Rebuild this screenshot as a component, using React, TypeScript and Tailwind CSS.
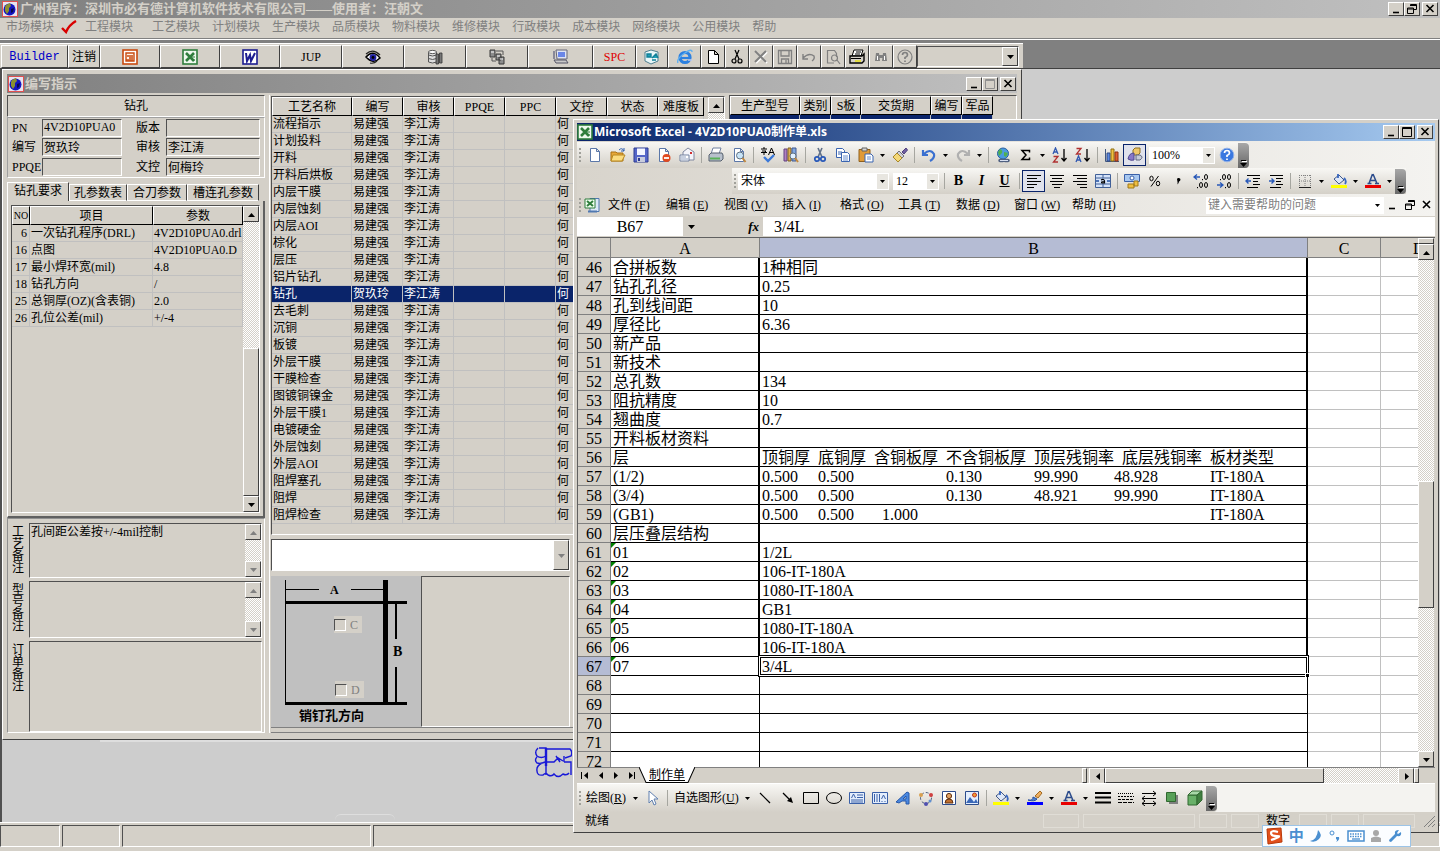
import React from "react";

const RAISED = "border border-t-white border-l-white border-r-[#404040] border-b-[#404040] bg-[#d4d0c8]";
const SUNKEN = "border border-t-[#505050] border-l-[#505050] border-r-white border-b-white";
const DITHER = "bg-[repeating-conic-gradient(#fff_0_25%,#d4d0c8_0_50%)] bg-[length:2px_2px]";

const W = ({ children }: { children: React.ReactNode }) => (
  <g fill="none" stroke="#000" strokeWidth="1.2">{children}</g>
);

const sheetPage = <path d="M3.5 1.5h6l3 3v10h-9z M9.5 1.5v3h3" fill="#fff" stroke="#5b77a8" />;

const ICONS: Record<string, React.ReactNode> = {
  globe: (
    <>
      <rect x="0.5" y="0.5" width="15" height="15" fill="#e8e4f0" stroke="#e05050" />
      <circle cx="7.500" cy="8.500" r="6" fill="#1515c0" />
      <path d="M4 4l4-2 1 3-2 2v3l-2 3-2-3V6z" fill="#8a9030" />
      <path d="M9 8l3-1-1 4-2 1z" fill="#0a0a50" />
    </>
  ),
  ppt: (
    <>
      <rect x="1" y="1" width="14" height="14" fill="#fff" stroke="#c84a10" strokeWidth="1.6" />
      <path d="M4 4h8v8H4z" fill="#fff4e8" stroke="#c84a10" strokeWidth="1.4" />
      <path d="M5 7h6M7 9h4M4 11h7" stroke="#c84a10" strokeWidth="1.4" />
    </>
  ),
  xls: (
    <>
      <rect x="1" y="1" width="14" height="14" fill="#eef8ee" stroke="#2f7d3c" strokeWidth="1.6" />
      <path d="M4 4l8 8M12 4l-8 8" stroke="#2f7d3c" strokeWidth="2.6" />
      <path d="M9 8h4M10 11h3" stroke="#2f7d3c" />
    </>
  ),
  doc: (
    <>
      <rect x="1" y="1" width="14" height="14" fill="#fff" stroke="#1c1c90" strokeWidth="1.6" />
      <path d="M4 4l1 8 3-6 1 6 4-8" fill="none" stroke="#1c1c90" strokeWidth="2" />
    </>
  ),
  eye: (
    <>
      <path d="M1 8q7-8 14 1q-7 7-14-1z" fill="#fff" stroke="#000" strokeWidth="1.5" />
      <path d="M1 5q7-6 14 1M5 14q4 1 7-2" fill="none" stroke="#222" strokeWidth="1.2" />
      <circle cx="8" cy="8.5" r="3.4" fill="#2020a0" />
      <circle cx="8" cy="8.5" r="1.4" fill="#000" />
    </>
  ),
  db: (
    <>
      <path d="M1.5 3v10q4 2 8 0V3z" fill="#ddd" stroke="#555" />
      <ellipse cx="5.5" cy="3" rx="4" ry="1.6" fill="#fff" stroke="#555" />
      <path d="M1.5 6q4 2 8 0M1.5 9.5q4 2 8 0" fill="none" stroke="#555" />
      <path d="M9 5h2.500v10H9zM12.500 4H15v10h-2.500z" fill="#777" stroke="#333" strokeWidth="0.8" />
    </>
  ),
  net: (
    <>
      <path d="M1 1h5v7H1zM7 5h5v6H7zM10 8h5v7h-5z" fill="#8c8c8c" stroke="#3a3a3a" />
      <path d="M2 3h3M8 7h3M11 10h3" stroke="#fff" />
      <path d="M7 2h7v4M3 9v3h4" fill="none" stroke="#555" />
    </>
  ),
  pc: (
    <>
      <path d="M3 1h11v9H4z" fill="#dfe4f4" stroke="#667" />
      <path d="M5 3h7v5H5z" fill="#6a86e8" />
      <path d="M1 11h12l2 3H3z" fill="#c8c8c8" stroke="#556" />
      <path d="M1 2v8" stroke="#889" strokeWidth="2" />
    </>
  ),
  book: (
    <>
      <path d="M1 3l6-2 7 2v9l-7 3-6-3z" fill="#e8f6f8" stroke="#508090" />
      <path d="M3 5h4v3H3zM8 9l4-4 2 4M8 11h4" fill="#20a0b8" stroke="#108098" strokeWidth="1.4" />
    </>
  ),
  ie: (
    <>
      <circle cx="8" cy="8.500" r="5" fill="none" stroke="#2b80e0" strokeWidth="3.200" />
      <path d="M4 9h10" stroke="#2b80e0" strokeWidth="2.200" />
      <path d="M11 11h4" stroke="#b8c8f0" strokeWidth="1.600" />
      <path d="M1 14Q-1 10 8 4q7-5 7-1" fill="none" stroke="#60b0f0" strokeWidth="1.4" />
    </>
  ),
  blank: <path d="M3.500 1.500h6l4 4v9h-10z M9.500 1.500v4h4" fill="#fff" stroke="#000" />,
  cutBlack: (
    <W>
      <path d="M6 1l4 9M10 1L6 10" />
      <circle cx="5" cy="12" r="2" />
      <circle cx="11" cy="12" r="2" />
    </W>
  ),
  del: (
    <>
      <path d="M3 3l11 11M14 3L3 14" stroke="#fff" strokeWidth="2" />
      <path d="M2 2l11 11M13 2L2 13" stroke="#808080" strokeWidth="2" />
    </>
  ),
  saveGray: (
    <g fill="none" stroke="#808080" strokeWidth="1.3">
      <path d="M1.500 1.500h13v13h-13z" />
      <path d="M4 2v5h8V2M4.500 14v-4h7v4M9 11v3" />
    </g>
  ),
  undoGray: <path d="M2 5v5h5M2 9q6-6 11-2q1 3-2 5" fill="none" stroke="#808080" strokeWidth="1.400" />,
  previewGray: (
    <g fill="none" stroke="#808080" strokeWidth="1.2">
      <path d="M9 14H2.500V1.500h7l2 3V8" />
      <circle cx="9.500" cy="9" r="3" />
      <path d="M12 11l3 4" />
    </g>
  ),
  printBlack: (
    <>
      <path d="M5 1h9l-2 6H3z" fill="#fff" stroke="#000" />
      <path d="M1 7h12l2-2v7l-2 2H1z" fill="#d4d0c8" stroke="#000" strokeWidth="1.4" />
      <path d="M6 12h6" stroke="#e8e020" strokeWidth="1.600" />
      <path d="M7 3h5M6 5h5M2 9.500h10" stroke="#000" />
    </>
  ),
  find: (
    <g fill="#808080">
      <path d="M3 4h3l1 8H2zM10 4h3l1 8H9z" />
      <path d="M6 6h4v3H6z" />
      <path d="M4.500 7v4M11.500 7v4" stroke="#fff" />
    </g>
  ),
  helpGray: (
    <g fill="none" stroke="#808080" strokeWidth="1.200">
      <circle cx="8" cy="8" r="7" />
      <path d="M5.500 6q0-2.500 2.500-2.500T10.500 6Q10.500 7.500 8 8.500V10M8 11.500v1.500" strokeWidth="1.700" />
    </g>
  ),
  page: sheetPage,
  open: (
    <>
      <path d="M1 5h5l1 1h6v8H1z" fill="#e8a83a" stroke="#a87010" />
      <path d="M3 8h12l-3 6H1z" fill="#fbdc80" stroke="#b88820" />
      <path d="M9 3q3-3 5 1M14 1v3h-3" fill="none" stroke="#3060b0" />
    </>
  ),
  save: (
    <>
      <path d="M1 1h14v14H1z" fill="#5566c8" stroke="#2c3a90" />
      <path d="M4 1.500h8V8H4z" fill="#f4f6ff" />
      <path d="M4 10h8v5H4z" fill="#c8ccdc" />
      <path d="M5 11h2v3H5z" fill="#2c3a90" />
    </>
  ),
  perm: (
    <>
      {sheetPage}
      <circle cx="10.500" cy="11" r="4" fill="#e04a20" />
      <path d="M8 11h5" stroke="#fff" strokeWidth="1.800" />
    </>
  ),
  mail: (
    <>
      <path d="M4 5l5-4 6 4v8H4z" fill="#f4f4fa" stroke="#8088a0" />
      <path d="M1 8h9v6H1z" fill="#fff" stroke="#7080a0" />
      <path d="M2 10h5M2 12h7" stroke="#90a0c0" />
      <path d="M11 5h2v2h-2z" fill="#d03030" />
    </>
  ),
  print: (
    <>
      <path d="M5 1h8l-2 6H3z" fill="#fff" stroke="#7080a0" />
      <path d="M1 8l2-2h11l1 2v4l-2 2H1z" fill="#b8c0cc" stroke="#56606e" />
      <path d="M2 11.500h10" stroke="#58b058" strokeWidth="2" />
    </>
  ),
  preview: (
    <>
      {sheetPage}
      <circle cx="9" cy="8.500" r="3.500" fill="#c8e4f8" stroke="#607080" />
      <path d="M11.500 11l3 4" stroke="#c08840" strokeWidth="2" />
    </>
  ),
  spell: (
    <>
      <path d="M1 2h6M4 0v2M2 4h4l-2 2v2M1 5.500h6M8.500 8l3-7 3 7M9.500 5.500h4" fill="none" stroke="#000" />
      <path d="M4 10l4 4 6-6" fill="none" stroke="#3a78d8" strokeWidth="2.400" />
    </>
  ),
  research: (
    <>
      <path d="M1 2h3v12H1z" fill="#b080c0" stroke="#604080" />
      <path d="M5 1h3v13H5z" fill="#e0b050" stroke="#806020" />
      <path d="M9 1h4v13H9z" fill="#80a8e0" stroke="#405890" />
      <circle cx="10" cy="9" r="3" fill="#e0f0ff" stroke="#607080" />
      <path d="M12 11l3 4" stroke="#c08840" strokeWidth="2" />
    </>
  ),
  cut: (
    <g fill="none">
      <path d="M6 1l4 9M10 1L6 10" stroke="#607088" strokeWidth="1.600" />
      <circle cx="5" cy="12" r="2.200" stroke="#2858b8" strokeWidth="1.700" />
      <circle cx="11" cy="12" r="2.200" stroke="#2858b8" strokeWidth="1.700" />
    </g>
  ),
  copy: (
    <g fill="#fff" stroke="#3a64b0">
      <path d="M1.500 1.500h6l2 2v7h-8z" />
      <path d="M3 5h4M3 7h4" />
      <path d="M6.500 5.500h6l2 2v7h-8z" />
      <path d="M8 9h5M8 11h5M8 13h5" stroke="#6a90d0" />
    </g>
  ),
  paste: (
    <>
      <path d="M1 2.500h11v12H1z" fill="#e09a38" stroke="#90601c" />
      <path d="M4 1h5v3H4z" fill="#d8d8d8" stroke="#606060" />
      <path d="M7 7h6l2 2v6H7z" fill="#fff" stroke="#3a64b0" />
      <path d="M9 10h4M9 12h4" stroke="#6a90d0" />
    </>
  ),
  brush: (
    <>
      <path d="M10 5l4-4 1.500 2-3.500 4z" fill="#7060a0" stroke="#504080" />
      <path d="M7 4l5 5-2 2-5-5z" fill="#d0d0d8" stroke="#707080" />
      <path d="M5 6l5 5-4 4-5-5z" fill="#f4d878" stroke="#a88828" />
    </>
  ),
  undo: <path d="M2 3v5h5M3 7q6-6 10 0q1 4-4 7" fill="none" stroke="#3a70d0" strokeWidth="2.200" />,
  redo: <path d="M14 3v5H9M13 7Q7 1 3 7q-1 4 4 7" fill="none" stroke="#b0b0b0" strokeWidth="2.200" />,
  link: (
    <>
      <circle cx="8" cy="6.500" r="5.500" fill="#4a9ae0" stroke="#2860a0" />
      <path d="M5 2q3 1 2 4L4 9 3 5zM9 5l4 1-2 4-2-1z" fill="#50b050" />
      <path d="M5 13.500h3M10 13.500h3" stroke="#506080" strokeWidth="3.500" strokeLinecap="round" />
      <path d="M5 13.500h8" stroke="#d8e0f0" />
    </>
  ),
  sigma: <path d="M11.500 5.500V3.500H4l4 4.500-4 4.500h7.500v-2" fill="none" stroke="#000" strokeWidth="1.500" />,
  az: (
    <g fill="none" strokeWidth="1.300">
      <path d="M1 7l2.500-6L6 7M2 5h3" stroke="#3058b0" />
      <path d="M1.500 9.500H6L1.500 15H6" stroke="#b03030" />
      <path d="M12 2v12M9.500 11l2.500 3 2.500-3" stroke="#000" />
    </g>
  ),
  za: (
    <g fill="none" strokeWidth="1.300">
      <path d="M1.500 1.500H6L1.500 7H6" stroke="#b03030" />
      <path d="M1 15l2.500-6L6 15M2 13h3" stroke="#3058b0" />
      <path d="M12 2v12M9.500 11l2.500 3 2.500-3" stroke="#000" />
    </g>
  ),
  chart: (
    <>
      <path d="M1.500 2v12.500H15" fill="none" stroke="#405880" />
      <path d="M3 6h3v8H3z" fill="#5a88e0" stroke="#304880" />
      <path d="M7 2h3v12H7z" fill="#f0c040" stroke="#907010" />
      <path d="M11 5h3v9h-3z" fill="#e06030" stroke="#903010" />
    </>
  ),
  draw: (
    <>
      <path d="M6 3l2-2h5v5l-2 2H6z" fill="#f0c868" stroke="#907020" />
      <path d="M1 12q1-6 6-6v7q-3 1-6-1z" fill="#8878c8" stroke="#504890" />
      <path d="M9 8h4q4 2 0 5H9z" fill="#c8ccd8" stroke="#606880" />
    </>
  ),
  help: (
    <>
      <circle cx="8" cy="8" r="6.800" fill="#3a78e0" stroke="#90b0e8" />
      <path d="M5.500 6q0-2.500 2.500-2.500T10.500 6Q10.500 7.500 8 8.500V10M8 11.500v1.500" fill="none" stroke="#fff" strokeWidth="1.700" />
    </>
  ),
  left: <path d="M1 2.500h14M1 5.500h10M1 8.500h14M1 11.500h10M1 14.500h7" stroke="#000" />,
  center: <path d="M1 2.500h14M3 5.500h10M1 8.500h14M3 11.500h10M5 14.500h6" stroke="#000" />,
  right: <path d="M1 2.500h14M5 5.500h10M1 8.500h14M5 11.500h10M8 14.500h7" stroke="#000" />,
  merge: (
    <>
      <path d="M.5 1.500h15v13H.5zM.5 5h15M.5 11h15M8 1.500V5M8 11v3.500" fill="#d4e2f8" stroke="#406098" />
      <path d="M1 8h3M12 8h3" stroke="#2050a0" strokeWidth="1.400" />
      <path d="M6 7q3-1.500 3.500 1v2H7Q5.500 8.500 9 8.500" fill="none" stroke="#000" strokeWidth="1.200" />
    </>
  ),
  money: (
    <>
      <path d="M.5 1.500h15v7H.5z" fill="#a8c8f0" stroke="#3a60a8" />
      <circle cx="8" cy="5" r="2" fill="#fff" stroke="#3a60a8" />
      <path d="M4 11h6v4H4zM10 8h4v5h-4z" fill="#f0c040" stroke="#a07818" />
    </>
  ),
  percent: (
    <g fill="none" stroke="#000">
      <ellipse cx="4.500" cy="5.500" rx="1.700" ry="2.300" /><ellipse cx="11" cy="10.500" rx="1.700" ry="2.300" /><path d="M11.500 3L4 13.500" />
    </g>
  ),
  comma: <path d="M7 6a1.800 1.800 0 1 1 2 2.500q0 2-2 3 1-1.500.5-2.500z" fill="#000" />,
  incDec: (
    <>
      <path d="M1 4h6M4 1.500L1 4l3 2.500" fill="none" stroke="#2858b8" strokeWidth="1.300" />
      <g fill="none" stroke="#000"><ellipse cx="13" cy="4" rx="1.500" ry="2.500" /><ellipse cx="8" cy="12" rx="1.500" ry="2.500" /><ellipse cx="13" cy="12" rx="1.500" ry="2.500" /><path d="M9.500 6v1.200M4.500 14v1.200" /></g>
    </>
  ),
  decDec: (
    <>
      <path d="M1 12h6M4 9.500L7 12l-3 2.500" fill="none" stroke="#2858b8" strokeWidth="1.300" />
      <g fill="none" stroke="#000"><ellipse cx="13" cy="4" rx="1.500" ry="2.500" /><ellipse cx="8" cy="4" rx="1.500" ry="2.500" /><ellipse cx="13" cy="12" rx="1.500" ry="2.500" /><path d="M4.500 6v1.200M9.500 14v1.200" /></g>
    </>
  ),
  outdent: (
    <>
      <path d="M2 2.500h13M8 5.500h7M8 8.500h5M8 11.500h7M2 14.500h11" stroke="#000" />
      <path d="M6 8H1M3.500 5.500L1 8l2.500 2.500" fill="none" stroke="#2858b8" strokeWidth="1.400" />
    </>
  ),
  indent: (
    <>
      <path d="M2 2.500h13M8 5.500h7M8 8.500h5M8 11.500h7M2 14.500h11" stroke="#000" />
      <path d="M1 8h5M3.500 5.500L6 8l-2.500 2.500" fill="none" stroke="#2858b8" strokeWidth="1.400" />
    </>
  ),
  borders: (
    <>
      <path d="M2 2.500h12M2.500 2v12M13.500 2v12M8 2v12M2 8h12" fill="none" stroke="#808080" strokeDasharray="1 1" />
      <path d="M2 14.500h12" stroke="#202020" />
    </>
  ),
  fill: (
    <>
      <path d="M3 6l5-4 5 5-5 4z" fill="#dfe8f8" stroke="#405888" />
      <path d="M7 1v4M13 5q3 3 1 6" fill="none" stroke="#3a68c0" strokeWidth="1.800" />
      <path d="M0 12h16v3H0z" fill="#ffff00" />
    </>
  ),
  pen: (
    <>
      <path d="M8 6l5-5 2 2-4 5z" fill="#f0b060" stroke="#a06820" />
      <path d="M1 10q5 1 5-3l4 2q-2 3-9 1z" fill="#4a80d0" stroke="#2850a0" />
      <path d="M0 12h16v3H0z" fill="#0000ff" />
    </>
  ),
  fontColor: (
    <>
      <path d="M4 10.500l3.500-9.500M8 1l4 9.500M5.500 7.500h5M2.500 10.500h4M10 10.500h4" fill="none" stroke="#2c4c8c" strokeWidth="1.500" />
      <path d="M0 12h16v3H0z" fill="#e80000" />
    </>
  ),
  book2: (
    <>
      <path d="M6 1.500h9v13H6z" fill="#dce8f8" stroke="#5078b0" />
      <path d="M1 2h10v9H1z" fill="#f0fff0" stroke="#2f7d3c" />
      <path d="M3 4l6 5M9 4L3 9" stroke="#2f7d3c" strokeWidth="2" />
      <path d="M4 14.500h9" stroke="#5078b0" strokeWidth="2" />
    </>
  ),
  cursor: <path d="M4 1v12l3-3 2 5 2-1-2-5h4z" fill="#fff" stroke="#6080b0" />,
  line: <W><path d="M3 3l10 10" /></W>,
  arrow: <><W><path d="M3 3l8 8" /></W><path d="M13 13l-2-6-4 4z" /></>,
  rect: <path d="M.5 2.500h15v11H.5z" fill="none" stroke="#000" />,
  oval: <ellipse cx="8" cy="8" rx="7.500" ry="5.500" fill="none" stroke="#000" />,
  textbox: (
    <>
      <path d="M.5 2.500h15v11H.5z" fill="#e4eefc" stroke="#3a60a8" />
      <path d="M2.500 8L4.500 4l2 4M8 5h6M8 7.500h6M2 10h12M2 12h12" fill="none" stroke="#3a60a8" />
    </>
  ),
  vtext: (
    <>
      <path d="M.5 2.500h15v11H.5z" fill="#e4eefc" stroke="#3a60a8" />
      <path d="M2.500 4v8M5 4v8M7.500 4v8M9.500 9l2-4 2 4M10 11v1M13 11v1" fill="none" stroke="#3a60a8" />
    </>
  ),
  wordart: <path d="M1 12L12 2l2 1v11h-3v-3H7l-3 2z M8 9h3V6z" fill="#4a88e0" stroke="#2858a8" fillRule="evenodd" />,
  diagram: (
    <>
      <circle cx="8" cy="8" r="5.500" fill="none" stroke="#506080" strokeDasharray="3 2" />
      <circle cx="3" cy="5" r="2" fill="#d8a050" /><circle cx="13" cy="5" r="2" fill="#d04040" />
      <circle cx="8" cy="14" r="2" fill="#5050b0" /><circle cx="12" cy="11" r="1.500" fill="#6090d0" />
    </>
  ),
  clip: (
    <>
      <path d="M1.500 1.500h13v13h-13z" fill="#fff" stroke="#2c4c8c" />
      <path d="M4 13q0-4 4-4t4 4z" fill="#c07030" stroke="#603010" />
      <circle cx="8" cy="6" r="2.600" fill="#e0a060" stroke="#603010" />
    </>
  ),
  photo: (
    <>
      <path d="M1.500 1.500h13v13h-13z" fill="#e4eefc" stroke="#2c4c8c" />
      <path d="M2 13l4-6 4 5 2-3 2 4z" fill="#3a68b8" />
      <circle cx="10.500" cy="5" r="2" fill="#f0a030" stroke="#c03020" />
    </>
  ),
  lines: <path d="M0 3h16M0 7.500h16M0 12.500h16" stroke="#000" strokeWidth="2.200" />,
  dashes: (
    <g stroke="#000">
      <path d="M0 3.500h16" strokeDasharray="1 1" /><path d="M0 6.500h16" strokeDasharray="2 1" />
      <path d="M0 9.500h16" strokeDasharray="3 1" /><path d="M0 12.500h16" strokeDasharray="4 1" />
    </g>
  ),
  arrows: (
    <g fill="none" stroke="#000">
      <path d="M1 3.500h14M12 1l3 2.500L12 6M1 8.500h14M4 6L1 8.500 4 11M1 13.500h14M4 11l-3 2.500L4 16M12 11l3 2.500-3 2.500" />
    </g>
  ),
  shadow: (
    <>
      <path d="M5 5h9v9H5z" fill="#808080" />
      <path d="M2.500 2.500h9v9h-9z" fill="#58a058" stroke="#306830" />
    </>
  ),
  cube: (
    <>
      <path d="M1 5h9v10H1z" fill="#68b068" stroke="#306830" />
      <path d="M1 5l4-4h10l-5 4z" fill="#a8d8a8" stroke="#306830" />
      <path d="M10 5l5-4v9l-5 5z" fill="#408040" stroke="#306830" />
    </>
  ),
};

function Icon({ name, size = "size-4" }: { name: string; size?: string }) {
  return <svg viewBox="0 0 16 16" className={"block shrink-0 " + size} aria-hidden="true">{ICONS[name]}</svg>;
}

function Tri({ dir = "down", gray = false }: { dir?: "up" | "down" | "left" | "right"; gray?: boolean }) {
  const d = { up: "M0 6h7L3.500 2z", down: "M0 2h7L3.500 6z", left: "M6 0v7L2 3.500z", right: "M2 0v7l4-3.500z" }[dir];
  return (
    <svg viewBox="0 0 7 7" className="block size-[7px] shrink-0" aria-hidden="true">
      <path d={d} fill={gray ? "#808080" : "#000"} />
    </svg>
  );
}

function WinButton({ kind, disabled = false }: { kind: "min" | "max" | "restore" | "close"; disabled?: boolean }) {
  const paths = {
    min: "M3 9.500h6",
    max: "M1.500 2.500h9M1.500 1.500v9h9v-9z",
    restore: "M4.500 3V1.500h6v5H8M4 2.500h6M1.500 5h6v5.500h-6zM1.500 6h6",
    close: "M2.500 2l7 7M9.500 2l-7 7",
  };
  return (
    <button aria-label={kind} disabled={disabled} className={"flex h-[14px] w-4 items-center justify-center " + RAISED}>
      <svg viewBox="0 0 12 12" className="block size-3" fill="none" stroke={disabled ? "#909090" : "#000"} strokeWidth={kind === "max" || kind === "restore" ? "1" : "1.600"}>
        <path d={paths[kind]} />
      </svg>
    </button>
  );
}

function ScrollButton({ dir, gray = false }: { dir: "up" | "down" | "left" | "right"; gray?: boolean }) {
  return (
    <button aria-label={"scroll " + dir} className={"flex size-4 shrink-0 items-center justify-center " + RAISED}>
      <Tri dir={dir} gray={gray} />
    </button>
  );
}

const MODULES = ["工艺模块", "计划模块", "生产模块", "品质模块", "物料模块", "维修模块", "行政模块", "成本模块", "网络模块"];

const TOOLS: { w: string; icon?: string; text?: string; cls?: string; label: string }[] = [
  { w: "w-[67px]", text: "Builder", cls: "font-['Liberation_Mono'] text-xs text-[#0000c8]", label: "Builder" },
  { w: "w-8", text: "注销", label: "注销" },
  { w: "w-[60px]", icon: "ppt", label: "PowerPoint" },
  { w: "w-[60px]", icon: "xls", label: "Excel" },
  { w: "w-[60px]", icon: "doc", label: "Word" },
  { w: "w-[62px]", text: "JUP", label: "JUP" },
  { w: "w-[62px]", icon: "eye", label: "查看" },
  { w: "w-[62px]", icon: "db", label: "数据库" },
  { w: "w-[62px]", icon: "net", label: "网络" },
  { w: "w-[65px]", icon: "pc", label: "计算机" },
  { w: "w-[43px]", text: "SPC", cls: "text-[#e00000]", label: "SPC" },
  { w: "w-8", icon: "book", label: "刷新" },
  { w: "w-[33px]", icon: "ie", label: "浏览器" },
  { w: "w-6", icon: "blank", label: "新建" },
  { w: "w-6", icon: "cutBlack", label: "剪切" },
  { w: "w-6", icon: "del", label: "删除" },
  { w: "w-6", icon: "saveGray", label: "保存" },
  { w: "w-6", icon: "undoGray", label: "撤消" },
  { w: "w-6", icon: "previewGray", label: "预览" },
  { w: "w-6", icon: "printBlack", label: "打印" },
  { w: "w-6", icon: "find", label: "查找" },
  { w: "w-6", icon: "helpGray", label: "帮助" },
];

const PROCESSES = [
  "流程指示", "计划投料", "开料", "开料后烘板", "内层干膜", "内层蚀刻", "内层AOI", "棕化", "层压", "铝片钻孔", "钻孔", "去毛刺",
  "沉铜", "板镀", "外层干膜", "干膜检查", "图镀铜镍金", "外层干膜1", "电镀硬金", "外层蚀刻", "外层AOI", "阻焊塞孔", "阻焊", "阻焊检查",
];

const PARAMS = [
  ["6", "一次钻孔程序(DRL)", "4V2D10PUA0.drl"],
  ["16", "点图", "4V2D10PUA0.D"],
  ["17", "最小焊环宽(mil)", "4.8"],
  ["18", "钻孔方向", "/"],
  ["25", "总铜厚(OZ)(含表铜)", "2.0"],
  ["26", "孔位公差(mil)", "+/-4"],
];

const TH = "h-[19px] p-0 text-center font-normal leading-4 border border-t-white border-l-white border-r-black border-b-black bg-[#d4d0c8]";
const TD = "h-[17px] overflow-hidden whitespace-nowrap border-r border-b border-[#c0c0c0] p-0 pl-px leading-4";

function Field({ id, label, value, w }: { id: string; label: string; value: string; w: string }) {
  return (
    <>
      <label htmlFor={id} className="leading-4">{label}</label>
      <input id={id} readOnly value={value} className={"h-[18px] bg-transparent pl-px outline-none " + w + " " + SUNKEN} />
    </>
  );
}

function Note({ id, label, value, scroll, h }: { id: string; label: string; value: string; scroll: boolean; h: string }) {
  return (
    <div className={"flex shrink-0 gap-1 pl-1 " + h}>
      <label htmlFor={id} className="w-3 shrink-0 pt-[3px] leading-3 break-all">{label}</label>
      <div className={"ml-px flex min-w-0 flex-1 " + SUNKEN}>
        <textarea id={id} readOnly value={value} className="min-w-0 flex-1 resize-none bg-transparent pl-px leading-4 outline-none" />
        {scroll && (
          <div className={"flex w-4 flex-col justify-between " + DITHER}>
            <ScrollButton dir="up" gray />
            <ScrollButton dir="down" gray />
          </div>
        )}
      </div>
    </div>
  );
}

function LeftPanel() {
  return (
    <section className="flex w-[258px] shrink-0 flex-col">
      <h2 className={"h-[22px] shrink-0 text-center leading-5 " + SUNKEN}>钻孔</h2>
      <div className="grid h-[61px] shrink-0 grid-cols-[30px_94px_30px_94px] items-center justify-items-start border border-[#a0a0a0] border-r-white border-b-white pl-1">
        <Field id="pn" label="PN" value="4V2D10PUA0" w="w-20" />
        <Field id="ver" label="版本" value="" w="w-[94px]" />
        <Field id="wr" label="编写" value="贺玖玲" w="w-20" />
        <Field id="ck" label="审核" value="李江涛" w="w-[94px]" />
        <Field id="ppqe" label="PPQE" value="" w="w-20" />
        <Field id="dc" label="文控" value="何梅玲" w="w-[94px]" />
      </div>
      <div role="tablist" className="mt-1 flex h-[19px] shrink-0 items-end">
        {[["钻孔要求", "w-[62px]"], ["孔参数表", "w-[58px]"], ["合刀参数", "w-[60px]"], ["槽连孔参数", "w-[72px]"]].map(([t, w], i) => (
          <button key={t} role="tab" aria-selected={i === 0}
            className={(i === 0 ? "h-[19px] pb-[2px] " : "h-[17px] border-b border-b-white ") + "border-t border-l border-r border-t-white border-l-white border-r-[#404040] leading-4 whitespace-nowrap " + w}>
            {t}
          </button>
        ))}
      </div>
      <div className="flex min-h-0 flex-1 flex-col border-r-2 border-b-2 border-l border-r-[#606060] border-b-[#606060] border-l-white px-[3px] pt-1 pb-[3px]">
        <div className={"flex min-h-0 flex-1 " + SUNKEN}>
          <div className="min-w-0 flex-1">
            <table className="w-full table-fixed border-separate border-spacing-0">
              <colgroup><col className="w-[18px]" /><col className="w-[123px]" /><col /></colgroup>
              <thead><tr><th className={TH + " text-[10px]"}>NO</th><th className={TH}>项目</th><th className={TH}>参数</th></tr></thead>
              <tbody>
                {PARAMS.map((r) => (
                  <tr key={r[0]}>
                    <td className="h-[17px] border-r border-b border-[#c0c0c0] p-0 pr-[2px] text-right leading-4">{r[0]}</td>
                    <td className={TD}>{r[1]}</td>
                    <td className={TD}>{r[2]}</td>
                  </tr>
                ))}
              </tbody>
            </table>
          </div>
          <div className={"flex w-4 flex-col " + DITHER}>
            <ScrollButton dir="up" />
            <div className="flex-1" />
            <div className={"h-[148px] " + RAISED} />
            <ScrollButton dir="down" />
          </div>
        </div>
      </div>
      <div className="flex shrink-0 flex-col gap-[3px] border border-[#909090] border-r-white border-b-white pt-1 pr-[2px]">
        <Note id="n1" label="工艺备注" value="孔间距公差按+/-4mil控制" scroll h="h-[55px]" />
        <Note id="n2" label="型号备注" value="" scroll h="h-[57px]" />
        <Note id="n3" label="订单备注" value="" scroll={false} h="h-[91px]" />
      </div>
    </section>
  );
}

function MiddlePanel() {
  return (
    <section className="flex w-[456px] shrink-0 flex-col border-l border-white pt-px pl-px">
      <div className={"flex min-h-0 flex-1 " + SUNKEN}>
        <div className="min-w-0 flex-1">
          <table className="table-fixed border-separate border-spacing-0">
            <colgroup>
              <col className="w-20" /><col className="w-[51px]" /><col className="w-[51px]" /><col className="w-[51px]" />
              <col className="w-[51px]" /><col className="w-[51px]" /><col className="w-[51px]" /><col className="w-[46px]" />
            </colgroup>
            <thead>
              <tr>{["工艺名称", "编写", "审核", "PPQE", "PPC", "文控", "状态", "难度板"].map((h) => <th key={h} className={TH + " whitespace-nowrap"}>{h}</th>)}</tr>
            </thead>
            <tbody>
              {PROCESSES.map((p, i) => (
                <tr key={p} className={i === 10 ? "bg-[#0a246a] text-white" : ""}>
                  <td className={TD}>{p}</td>
                  <td className={TD}>{i === 10 ? "贺玖玲" : "易建强"}</td>
                  <td className={TD}>李江涛</td>
                  <td className={TD} />
                  <td className={TD} />
                  <td className={TD}>何</td>
                  <td className={TD} />
                  <td className={TD} />
                </tr>
              ))}
            </tbody>
          </table>
        </div>
        <div className={"flex w-4 flex-col justify-between " + DITHER}>
          <ScrollButton dir="up" />
          <ScrollButton dir="down" />
        </div>
      </div>
      <div className="mt-1 flex h-8 shrink-0">
        <div className={"relative w-[299px] bg-white " + SUNKEN}>
          <select aria-label="选择" className="h-full w-full appearance-none bg-white px-1 outline-none"><option></option></select>
          <span className={"pointer-events-none absolute inset-y-0 right-0 flex w-4 items-center justify-center " + RAISED}><Tri gray /></span>
        </div>
      </div>
      <div className="mt-[5px] flex h-[151px] shrink-0">
        <div className="relative w-[150px] bg-[#c0c0c0]">
          <svg viewBox="0 0 150 151" className="block h-full w-full" aria-hidden="true">
            <path d="M14.500 4v124M14 13.500h34M80 13.500h32" stroke="#000" fill="none" />
            <path d="M14 26.500h122M14 127.500h122" stroke="#000" strokeWidth="3" />
            <path d="M114.500 4v124" stroke="#000" strokeWidth="5" />
            <path d="M125 28v35M125 91v36" stroke="#000" strokeWidth="2" />
          </svg>
          <b className="absolute top-[6px] left-[59px] leading-4">A</b>
          <b className="absolute top-[68px] left-[122px] text-sm leading-4">B</b>
          <label className="absolute top-10 left-[63px] flex h-[17px] items-center gap-1 bg-[#d4d0c8] pr-1 text-[#808080]">
            <input type="checkbox" disabled className={"size-3 appearance-none bg-[#d4d0c8] " + SUNKEN} />C
          </label>
          <label className="absolute top-[105px] left-16 flex h-[17px] items-center gap-1 bg-[#d4d0c8] pr-1 text-[#808080]">
            <input type="checkbox" disabled className={"size-3 appearance-none bg-[#d4d0c8] " + SUNKEN} />D
          </label>
          <b className="absolute top-[132px] left-7 text-[13px] leading-4 whitespace-nowrap">销钉孔方向</b>
        </div>
        <div className={"w-[149px] " + SUNKEN} />
      </div>
      <div className="h-[6px] shrink-0 border-y border-t-[#808080] border-b-[#808080]" />
    </section>
  );
}

function ModelPanel() {
  return (
    <section className={"min-w-0 flex-1 " + SUNKEN}>
      <table className="table-fixed border-separate border-spacing-0">
        <colgroup>
          <col className="w-[70px]" /><col className="w-[31px]" /><col className="w-[30px]" /><col className="w-[70px]" /><col className="w-[31px]" /><col className="w-[31px]" />
        </colgroup>
        <thead><tr>{["生产型号", "类别", "S板", "交货期", "编写", "军品"].map((h) => <th key={h} className={TH + " whitespace-nowrap"}>{h}</th>)}</tr></thead>
        <tbody><tr className="bg-[#0a246a]">{[0, 1, 2, 3, 4, 5].map((c) => <td key={c} className={TD} />)}</tr></tbody>
      </table>
    </section>
  );
}

function InstructionWindow() {
  return (
    <div className="absolute top-0 left-0 flex h-[671px] w-[1020px] flex-col border border-white border-r-[#404040] border-b-[#404040] bg-[#d4d0c8] p-1 pb-[6px]">
      <header className="flex h-[19px] shrink-0 items-center gap-px bg-linear-to-r from-[#808080] to-[#c0c0c0] pr-px pl-px">
        <Icon name="globe" />
        <h1 className="flex-1 text-[13px] leading-4 font-bold text-[#d4d0c8]">编写指示</h1>
        <div className="flex"><WinButton kind="min" /><WinButton kind="max" disabled /></div>
        <div className="ml-px"><WinButton kind="close" /></div>
      </header>
      <div className="mt-[2px] flex min-h-0 flex-1 gap-1">
        <LeftPanel />
        <MiddlePanel />
        <ModelPanel />
      </div>
    </div>
  );
}

type Item = string;

function ToolButton({ name, active = false }: { name: string; active?: boolean }) {
  return (
    <button aria-label={name} className={"flex h-[22px] w-[23px] shrink-0 items-center justify-center " + (active ? "border border-[#0a246a] bg-[#e0e2ec]" : "")}>
      <Icon name={name} />
    </button>
  );
}

/* "|" draws a separator, "v" a drop-down arrow, a leading "*" marks a pressed button. */
function Strip({ items }: { items: Item[] }) {
  return (
    <>
      {items.map((it, i) => {
        if (it === "|") return <span key={i} className="flex w-[6px] shrink-0 justify-center"><span className="h-4 w-px bg-[#a6a6a0]" /></span>;
        if (it === "v") return <button key={i} aria-label="more" className="flex h-5 w-[11px] shrink-0 items-center justify-center"><svg viewBox="0 0 5 3" className="block h-[3px] w-[5px]"><path d="M0 0h5L2.500 3z" /></svg></button>;
        if (it.startsWith("*")) return <ToolButton key={i} name={it.slice(1)} active />;
        return <ToolButton key={i} name={it} />;
      })}
    </>
  );
}

const Grip = () => <span className="mx-[2px] h-[14px] w-[2px] shrink-0 bg-[repeating-linear-gradient(#a0a09a_0_2px,transparent_2px_4px)]" />;
const EndCap = () => (
  <button aria-label="toolbar options" className="flex h-[25px] w-[11px] shrink-0 flex-col items-center justify-end rounded-r bg-linear-to-b from-[#a8a8a8] to-[#686868] pb-px">
    <svg viewBox="0 0 7 8" className="block h-2 w-[7px]"><path d="M1 1.500h5" stroke="#000" /><path d="M0 4h7L3.500 8z" fill="#000" /><path d="M2 2.500h5" stroke="#fff" /></svg>
  </button>
);

function Combo({ label, value, w }: { label: string; value: string; w: string }) {
  return (
    <span className={"relative h-[17px] shrink-0 bg-white " + w}>
      <select aria-label={label} className="block h-full w-full appearance-none bg-transparent pl-[3px] leading-4 outline-none"><option>{value}</option></select>
      <span className="pointer-events-none absolute inset-y-px right-px flex w-[11px] items-center justify-center bg-[#e8e6e0]">
        <svg viewBox="0 0 5 3" className="block h-[3px] w-[5px]"><path d="M0 0h5L2.500 3z" /></svg>
      </span>
    </span>
  );
}

const MENUS = [["文件", "F"], ["编辑", "E"], ["视图", "V"], ["插入", "I"], ["格式", "O"], ["工具", "T"], ["数据", "D"], ["窗口", "W"], ["帮助", "H"]];

const ROWS: [number, string, string | string[]][] = [
  [46, "合拼板数", "1种相同"], [47, "钻孔孔径", "0.25"], [48, "孔到线间距", "10"], [49, "厚径比", "6.36"], [50, "新产品", ""],
  [51, "新技术", ""], [52, "总孔数", "134"], [53, "阻抗精度", "10"], [54, "翘曲度", "0.7"], [55, "开料板材资料", ""],
  [56, "层", ["顶铜厚", "底铜厚", "含铜板厚", "不含铜板厚", "顶层残铜率", "底层残铜率", "板材类型"]],
  [57, "(1/2)", ["0.500", "0.500", "", "0.130", "99.990", "48.928", "IT-180A"]],
  [58, "(3/4)", ["0.500", "0.500", "", "0.130", "48.921", "99.990", "IT-180A"]],
  [59, "(GB1)", ["0.500", "0.500", "1.000", "", "", "", "IT-180A"]],
  [60, "层压叠层结构", ""], [61, "01", "1/2L"], [62, "02", "106-IT-180A"], [63, "03", "1080-IT-180A"], [64, "04", "GB1"],
  [65, "05", "1080-IT-180A"], [66, "06", "106-IT-180A"], [67, "07", "3/4L"], [68, "", ""], [69, "", ""], [70, "", ""], [71, "", ""], [72, "", ""],
];

const CELL = "relative h-[19px] border-b border-black p-0 pt-[2px] pl-[2px] leading-4 whitespace-nowrap ";

function Sheet() {
  const th = "h-5 border-r border-b border-[#808080] p-0 pt-[3px] text-center font-normal leading-4";
  return (
    <div className="flex min-h-0 flex-1 border-t border-l border-[#606060] bg-white">
      <div className="min-h-0 min-w-0 flex-1 overflow-hidden">
        <table className="w-full table-fixed border-separate border-spacing-0 text-base">
          <colgroup><col className="w-[33px]" /><col className="w-[149px]" /><col /><col className="w-[73px]" /><col className="w-[37px]" /></colgroup>
          <thead>
            <tr className="bg-[#d4d0c8]">
              <th className={th} /><th className={th}>A</th>
              <th className={th + " bg-[#b5bcd4] border-[#0a246a]"}>B</th>
              <th className={th}>C</th>
              <th className="h-5 overflow-hidden border-b border-[#808080] p-0 pt-[3px] pl-8 text-left leading-4 font-normal">D</th>
            </tr>
          </thead>
          <tbody>
            {ROWS.map(([n, a, b]) => {
              const edge = n < 67 ? "border-r-2" : "border-r";
              return (
                <tr key={n}>
                  <th className={"h-[19px] border-r border-b border-[#808080] p-0 pt-[2px] text-center leading-4 font-normal " + (n === 67 ? "bg-[#b5bcd4]" : "bg-[#d4d0c8]")}>{n}</th>
                  <td className={CELL + edge}>
                    {n > 60 && n < 68 && <span className="absolute top-0 left-0 size-[5px] bg-[#008000] [clip-path:polygon(0_0,100%_0,0_100%)]" />}
                    {a}
                  </td>
                  <td className={CELL + edge}>
                    {Array.isArray(b) ? (
                      <div className={"grid " + (n === 56 ? "grid-cols-[56px_56px_72px_88px_88px_88px_80px]" : "grid-cols-[56px_56px_72px_88px_80px_96px_80px]")}>
                        {b.map((v, i) => <span key={i} className={i === 2 && n === 59 ? "pl-2" : ""}>{v}</span>)}
                      </div>
                    ) : b}
                    {n === 67 && (
                      <>
                        <span className="absolute -inset-[2px] border border-black shadow-[inset_0_0_0_1px_#fff,inset_0_0_0_2px_#000]" />
                        <span className="absolute -right-[3px] -bottom-[3px] size-[5px] border border-white bg-black" />
                      </>
                    )}
                  </td>
                  <td className="h-[19px] border-r border-b border-[#c0c0c0] p-0" />
                  <td className="h-[19px] border-b border-[#c0c0c0] p-0" />
                </tr>
              );
            })}
          </tbody>
        </table>
      </div>
      <div className={"flex w-4 shrink-0 flex-col " + DITHER}>
        <div className={"h-[6px] shrink-0 " + RAISED} />
        <ScrollButton dir="up" />
        <div className="flex-1" />
        <div className={"h-[127px] shrink-0 " + RAISED} />
        <div className="h-[143px] shrink-0" />
        <ScrollButton dir="down" />
      </div>
      <div className="w-px shrink-0 bg-[#d4d0c8]" />
    </div>
  );
}

function ExcelWindow() {
  return (
    <div className="absolute top-[119px] right-px bottom-[18px] left-[573px] flex flex-col border border-white border-r-[#404040] border-b-[#404040] bg-[#d4d0c8] p-[3px]">
      <header className="flex h-[18px] shrink-0 items-center gap-px bg-linear-to-r from-[#0a246a] to-[#a6caf0] pr-[2px]">
        <Icon name="xls" />
        <h1 className="flex-1 font-['Open_Sans','Noto_Sans_CJK_SC',sans-serif] text-xs leading-4 font-bold text-white">Microsoft Excel - 4V2D10PUA0制作单.xls</h1>
        <div className="flex"><WinButton kind="min" /><WinButton kind="max" /></div>
        <div className="ml-px"><WinButton kind="close" /></div>
      </header>
      <div className="bg-linear-to-r from-[#d8d4cc] to-[#f4f3f0] pt-px">
        <div className="flex h-[26px]">
          <div className="flex items-center rounded-r bg-linear-to-b from-[#f8f7f4] to-[#d4d0c8]">
            <Grip />
            <Strip items={["page", "open", "save", "perm", "mail", "|", "print", "preview", "|", "spell", "research", "|", "cut", "copy", "paste", "v", "brush", "|", "undo", "v", "redo", "v", "|", "link", "sigma", "v", "az", "za", "|", "chart", "*draw"]} />
            <span className="ml-[3px] flex"><Combo label="显示比例" value="100%" w="w-[66px]" /></span>
            <ToolButton name="help" />
            <EndCap />
          </div>
        </div>
        <div className="flex h-[26px]">
          <div className="ml-[155px] flex items-center bg-linear-to-b from-[#f8f7f4] to-[#d4d0c8]">
            <Grip />
            <span className="flex gap-1 pr-[2px]"><Combo label="字体" value="宋体" w="w-[151px]" /><Combo label="字号" value="12" w="w-[46px]" /></span>
            <Strip items={["|"]} />
            <button className="w-[23px] text-sm font-bold">B</button>
            <button className="w-[23px] text-sm font-bold italic">I</button>
            <button className="w-[23px] text-sm font-bold underline">U</button>
            <Strip items={["|", "*left", "center", "right", "merge", "|", "money", "percent", "comma", "incDec", "decDec", "|", "outdent", "indent", "|", "borders", "v", "fill", "v", "fontColor", "v"]} />
            <EndCap />
          </div>
        </div>
        <nav className="flex h-[22px] items-center">
          <Grip />
          <span className="mr-2 ml-px"><Icon name="book2" /></span>
          {MENUS.map(([t, k]) => (
            <button key={t} className="w-[58px] shrink-0 text-left leading-4 whitespace-nowrap">{t} (<u>{k}</u>)</button>
          ))}
          <span className="flex-1" />
          <span className="flex h-[17px] w-[178px] items-center bg-white pr-1">
            <input aria-label="帮助问题" placeholder="键入需要帮助的问题" className="min-w-0 flex-1 pl-[2px] outline-none placeholder:text-[#808080]" />
            <svg viewBox="0 0 5 3" className="block h-[3px] w-[5px]"><path d="M0 0h5L2.500 3z" /></svg>
          </span>
          {["M2 9.500h6", "M4.500 3V1.500h6v5H8M4 2.500h6M1.500 5h6v5.500h-6zM1.500 6h6", "M2 2l7 7M9 2l-7 7"].map((d, i) => (
            <button key={d} aria-label="window" className="flex w-[17px] justify-center">
              <svg viewBox="0 0 12 12" className="block size-3" fill="none" stroke="#000" strokeWidth={i === 1 ? "1" : "1.600"}><path d={d} /></svg>
            </button>
          ))}
        </nav>
      </div>
      <div className="flex h-[21px] shrink-0 items-center bg-[#d4d0c8] py-px text-base">
        <input aria-label="名称框" readOnly value="B67" className="h-full w-[106px] bg-white text-center leading-[18px] outline-none" />
        <div className="flex h-full flex-1 items-center">
          <span className="flex h-full w-20 items-center justify-between pr-1 pl-[5px]">
            <Tri /><i className="text-[13px] font-bold">fx</i>
          </span>
          <input aria-label="编辑栏" readOnly value="3/4L" className="h-full flex-1 bg-white pl-[11px] outline-none" />
        </div>
      </div>
      <Sheet />
      <div className="flex h-4 shrink-0 border-t border-[#808080]">
        <div className="flex w-[62px] items-center justify-around">
          <button aria-label="first" className="flex items-center"><span className="h-[7px] w-px bg-black" /><Tri dir="left" /></button>
          <button aria-label="previous"><Tri dir="left" /></button>
          <button aria-label="next"><Tri dir="right" /></button>
          <button aria-label="last" className="flex items-center"><Tri dir="right" /><span className="h-[7px] w-px bg-black" /></button>
        </div>
        <button className="relative -mt-px w-14 leading-[14px]">
          <svg viewBox="0 0 56 15" preserveAspectRatio="none" className="absolute inset-0 h-full w-full"><path d="M0 0L7 14.500H49L56 0" fill="#fff" stroke="#000" /></svg>
          <span className="relative underline">制作单</span>
        </button>
        <span className="flex-1" />
        <div className={"mr-[2px] w-[5px] " + RAISED} />
        <div className={"flex w-[325px] " + DITHER}>
          <ScrollButton dir="left" />
          <div className={"w-[219px] " + RAISED} />
          <span className="flex-1" />
          <ScrollButton dir="right" />
        </div>
        <div className={"mr-4 w-[5px] " + RAISED} />
      </div>
      <div className="flex h-[29px] shrink-0 border-t border-white bg-[#f4f3f0]">
        <div className="flex items-center rounded-r bg-linear-to-b from-[#f8f7f4] to-[#d4d0c8]">
          <Grip />
          <button className="ml-[3px] w-[44px] text-left whitespace-nowrap">绘图(<u>R</u>)</button>
          <Strip items={["v", "cursor", "|"]} />
          <button className="ml-1 w-[68px] text-left whitespace-nowrap">自选图形(<u>U</u>)</button>
          <Strip items={["v", "line", "arrow", "rect", "oval", "textbox", "vtext", "wordart", "diagram", "clip", "photo", "|", "fill", "v", "pen", "v", "fontColor", "v", "lines", "dashes", "arrows", "shadow", "cube"]} />
          <EndCap />
        </div>
      </div>
      <footer className="flex h-[17px] shrink-0 items-center pl-2">
        <span className="flex-1 leading-4">就绪</span>
        {["w-9", "w-28", "w-7", "w-7"].map((w, i) => <span key={i} className={"mr-1 h-[14px] border border-[#e0ddd6] " + w} />)}
        <span className="mr-1 ml-[3px] w-[29px] leading-4">数字</span>
        {["w-7", "w-7", "w-[52px]"].map((w, i) => <span key={i} className={"mr-1 h-[14px] border border-[#e0ddd6] " + w} />)}
        <svg viewBox="0 0 12 12" className="ml-1 block size-3" stroke="#808080"><path d="M1 12L12 1M5 12l7-7M9 12l3-3" /></svg>
      </footer>
    </div>
  );
}

function InputMethodBar() {
  return (
    <div className="absolute right-[29px] bottom-1 flex h-[22px] w-[149px] items-center justify-between border border-[#9cc4e8] bg-[#fbfdff] pr-2 pl-[2px] text-[#4a8fd0]">
      <svg viewBox="0 0 18 18" className="block size-[18px]">
        <path d="M2 2l14-1 1 14-14 2z" fill="#e2501c" stroke="#b83808" />
        <path d="M13 5Q6 3 6 6t6 3-6 4" fill="none" stroke="#fff" strokeWidth="2.200" />
      </svg>
      <b className="text-[15px] leading-5">中</b>
      <svg viewBox="0 0 14 14" className="block size-[14px]"><path d="M9 1q5 5 1 9t-9 2q7-1 8-11z" fill="#4a8fd0" /></svg>
      <svg viewBox="0 0 12 14" className="block h-[14px] w-3"><circle cx="3" cy="4" r="2" fill="none" stroke="#4a8fd0" /><path d="M7 8h3q1 3-3 5 2-2 0-3z" fill="#4a8fd0" /></svg>
      <svg viewBox="0 0 18 12" className="block h-3 w-[18px]"><path d="M1 1h16v10H1z" fill="#fff" stroke="#4a8fd0" strokeWidth="1.500" /><path d="M3 4h12M3 6.500h12" stroke="#4a8fd0" strokeWidth="1.400" strokeDasharray="1.500 1" /><path d="M5 9h8" stroke="#4a8fd0" strokeWidth="1.300" /></svg>
      <svg viewBox="0 0 12 14" className="block h-[14px] w-3" fill="#a8a8a8"><circle cx="6" cy="4" r="3" /><path d="M1 13V9q5-3 10 0v4z" /></svg>
      <svg viewBox="0 0 14 14" className="block size-[14px]"><path d="M1 11l6-6q-1-4 4-4L9 4l1 1 3-2q1 5-4 4l-6 6q-2 0-2-2z" fill="#4a8fd0" /></svg>
    </div>
  );
}

export default function App() {
  return (
    <div className="relative flex h-screen min-h-[760px] min-w-[1200px] flex-col overflow-hidden bg-[#d4d0c8] font-['Liberation_Serif','Noto_Sans_CJK_SC',serif] text-xs text-black">
      <header className="flex h-[18px] shrink-0 items-center bg-linear-to-r from-[#808080] to-[#c0c0c0] pr-[2px] pl-[2px]">
        <Icon name="globe" />
        <h1 className="ml-[2px] flex-1 text-[13px] leading-4 font-bold text-[#d4d0c8]">广州程序：深圳市必有德计算机软件技术有限公司——使用者：汪朝文</h1>
        <div className="flex"><WinButton kind="min" /><WinButton kind="restore" /></div>
        <div className="ml-[2px]"><WinButton kind="close" /></div>
      </header>
      <nav className="flex h-[21px] shrink-0 items-center border-b border-[#808080] pb-[2px] pl-[6px] text-[#808080] [text-shadow:1px_1px_0_#fff]">
        <button className="leading-4">市场模块</button>
        <svg viewBox="0 0 16 14" className="mr-2 ml-[7px] block h-[14px] w-4"><path d="M1 8l4 4Q8 5 15 1" fill="none" stroke="#d80000" strokeWidth="2.400" /></svg>
        <button className="mr-[19px] leading-4 [text-shadow:none]">工程模块</button>
        {MODULES.map((m) => <button key={m} className="mr-3 leading-4">{m}</button>)}
        <button className="mr-3 leading-4 [text-shadow:none]">公用模块</button>
        <button className="leading-4 [text-shadow:none]">帮助</button>
      </nav>
      <div className="flex h-[30px] shrink-0 border-t border-b border-t-white border-b-[#404040] bg-[#808080] pt-[3px]">
        <div className="flex border-t border-white bg-[#d4d0c8] pt-px pr-1 pl-px">
          {TOOLS.map((t) => (
            <button key={t.label} aria-label={t.label} className={"flex items-center justify-center leading-4 " + t.w + " " + RAISED + " " + (t.cls ?? "")}>
              {t.icon ? <Icon name={t.icon} /> : t.text}
            </button>
          ))}
          <span className={"relative my-px w-[102px] " + SUNKEN}>
            <select aria-label="工具选择" className="h-full w-full appearance-none bg-transparent outline-none"><option></option></select>
            <span className={"pointer-events-none absolute inset-y-0 right-0 flex w-4 items-center justify-center " + RAISED}><Tri /></span>
          </span>
        </div>
      </div>
      <main className="relative min-h-0 flex-1 border-l-2 border-[#505050] bg-[#cdcdcd]">
        <svg viewBox="0 0 38 32" className="absolute top-[677px] left-[532px] block h-8 w-[38px]" fill="none" stroke="#1818d8" strokeWidth="1.400">
          <path d="M5 2h7v27M13 3h23q3 3 1 7l-6 2" />
          <path d="M12 2v18" strokeWidth="2.400" />
          <path d="M4 2q-4 4-1 8 4 3 9 0M3 11q-3 3 0 6 4 1 8-1M8 17q-6 3-5 8 0 5 6 4 3-3 5 0 4 2 6-1 4 5 9 0 4 2 6-1" />
          <path d="M12 16h8l4-4 5 3M22 10l4 6M30 10v6M30 16h7v13" />
        </svg>
        <div className="absolute top-[671px] left-[98px] h-[2px] w-[474px] bg-[#dedede]" />
        <div className="absolute bottom-[2px] left-[333px] h-[6px] w-[60px] rounded-t-lg border-t border-[#dedede]" />
        <InstructionWindow />
      </main>
      <footer className="flex h-[29px] shrink-0 gap-[2px] border-t border-white pt-[2px] pb-1">
        <span className={"w-[60px] " + SUNKEN} />
        <span className={"w-[58px] " + SUNKEN} />
        <span className={"w-[249px] " + SUNKEN} />
        <span className={"flex-1 " + SUNKEN} />
      </footer>
      <ExcelWindow />
      <InputMethodBar />
    </div>
  );
}
